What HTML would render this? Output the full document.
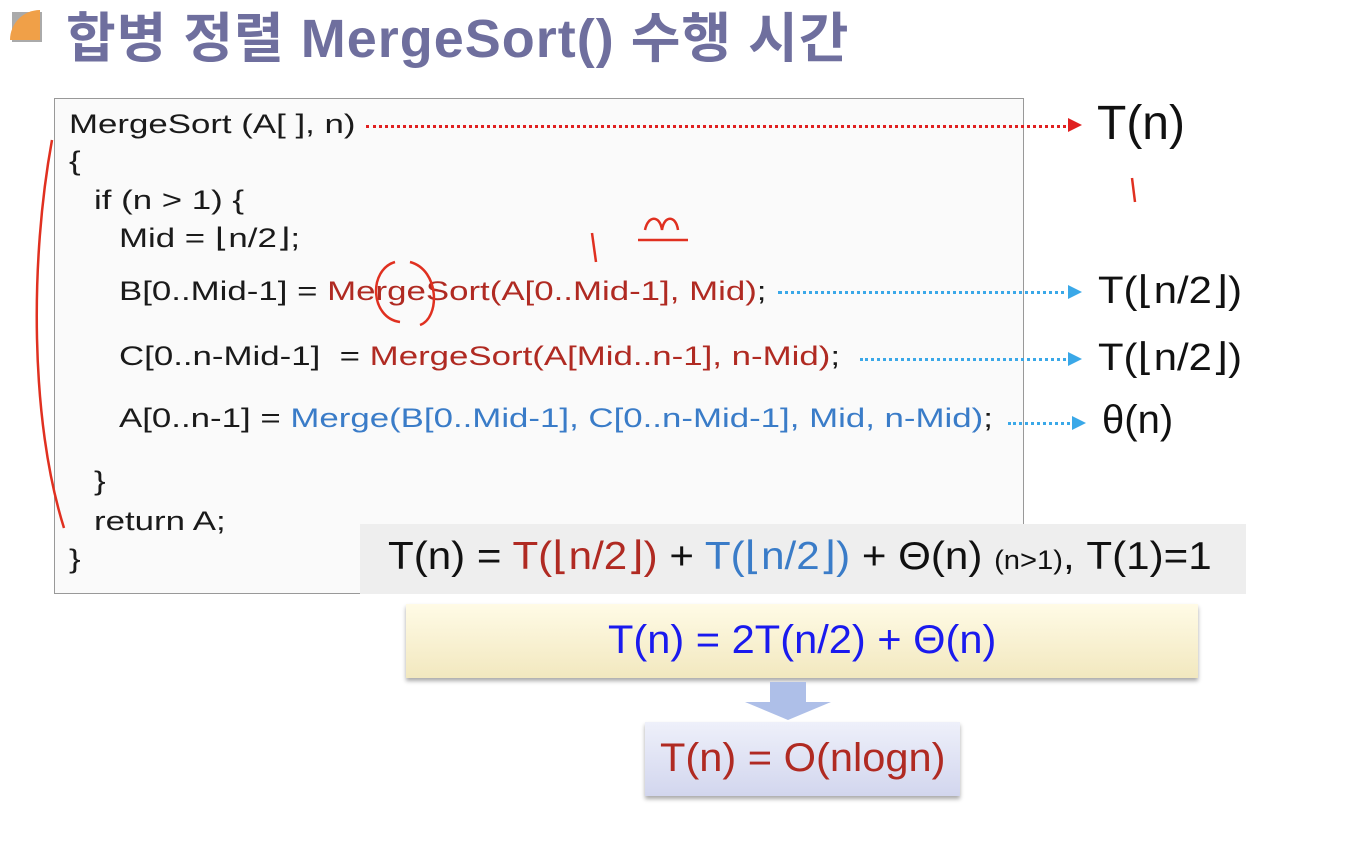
<!DOCTYPE html>
<html><head><meta charset="utf-8"><style>
body{margin:0;width:1360px;height:860px;background:#fff;position:relative;overflow:hidden;font-family:"Liberation Sans","Noto Sans CJK KR",sans-serif}
.a{position:absolute;white-space:nowrap}
.code{font-size:27px;color:#1a1a1a;transform:scaleX(1.29);transform-origin:left;margin-top:-1px}
.r{color:#b02a22}.b{color:#3a7cc8}
.dotr{position:absolute;height:0;border-top:3px dotted #e02020}
.dotb{position:absolute;height:0;border-top:3px dotted #3aa8e8}
.nar{display:inline-block;transform-origin:left}
</style></head><body>
<div class="a" style="left:12px;top:12px;width:30px;height:30px;background:#aaa;"></div>
<div class="a" style="left:10px;top:10px;width:30px;height:30px;background:#f0a048;border-top-left-radius:30px"></div>
<div class="a" style="left:66px;top:-6px;font-size:54px;color:#6f6f9e;font-weight:bold;letter-spacing:1px">합병 정렬 MergeSort() 수행 시간</div>

<div class="a" style="left:54px;top:98px;width:968px;height:494px;border:1px solid #999;background:#fafafa"></div>
<div class="a code" style="left:69px;top:110px">MergeSort (A[ ], n)</div>
<div class="a code" style="left:69px;top:147px">{</div>
<div class="a code" style="left:94px;top:186px">if (n &gt; 1) {</div>
<div class="a code" style="left:119px;top:224px">Mid = ⌊n/2⌋;</div>
<div class="a code" style="left:119px;top:277px">B[0..Mid-1] = <span class="r">MergeSort(A[0..Mid-1], Mid)</span>;</div>
<div class="a code" style="left:119px;top:342px">C[0..n-Mid-1]&nbsp; = <span class="r">MergeSort(A[Mid..n-1], n-Mid)</span>;</div>
<div class="a code" style="left:119px;top:404px">A[0..n-1] = <span class="b">Merge(B[0..Mid-1], C[0..n-Mid-1], Mid, n-Mid)</span>;</div>
<div class="a code" style="left:94px;top:467px">}</div>
<div class="a code" style="left:94px;top:507px">return A;</div>
<div class="a code" style="left:69px;top:545px">}</div>

<div class="dotr" style="left:366px;top:125px;width:706px"></div>
<div class="a" style="left:1068px;top:118px;border-left:14px solid #e02020;border-top:7px solid transparent;border-bottom:7px solid transparent"></div>
<div class="dotb" style="left:778px;top:291px;width:294px"></div>
<div class="a" style="left:1068px;top:285px;border-left:14px solid #3aa8e8;border-top:7px solid transparent;border-bottom:7px solid transparent"></div>
<div class="dotb" style="left:860px;top:358px;width:212px"></div>
<div class="a" style="left:1068px;top:352px;border-left:14px solid #3aa8e8;border-top:7px solid transparent;border-bottom:7px solid transparent"></div>
<div class="dotb" style="left:1008px;top:422px;width:68px"></div>
<div class="a" style="left:1072px;top:416px;border-left:14px solid #3aa8e8;border-top:7px solid transparent;border-bottom:7px solid transparent"></div>

<div class="a" style="left:1097px;top:96px;font-size:48px;color:#111">T(n)</div>
<div class="a" style="left:1098px;top:268px;font-size:38px;color:#111;transform:scaleX(1.1);transform-origin:left">T(⌊n/2⌋)</div>
<div class="a" style="left:1098px;top:335px;font-size:38px;color:#111;transform:scaleX(1.1);transform-origin:left">T(⌊n/2⌋)</div>
<div class="a" style="left:1102px;top:398px;font-size:40px;color:#111">θ(n)</div>

<svg class="a" style="left:0;top:0" width="1360" height="860" fill="none" stroke="#e03020" stroke-width="2.5">
<path d="M52 140 C30 260 30 420 64 528"/>
<path d="M1132 178 L1135 202"/>
<path d="M592 233 L596 262"/>
<path d="M638 240 L688 240"/>
<path d="M645 230 C648 215 660 215 662 230 C664 215 676 215 678 230"/>
<path d="M395 262 C368 270 370 318 400 322 M410 262 C440 270 440 318 420 325"/>
</svg>

<div class="a" style="left:360px;top:524px;width:886px;height:70px;background:#eeeeee"></div>
<div class="a" style="left:388px;top:534px;font-size:39px;color:#111"><span class="nar" style="transform:scaleX(1.08)">T(n) = <span class="r">T(⌊n/2⌋)</span> + <span class="b">T(⌊n/2⌋)</span> + Θ(n) <span style="font-size:27px">(n&gt;1)</span>, T(1)=1</span></div>

<div class="a" style="left:406px;top:604px;width:792px;height:74px;background:linear-gradient(#fffbe6,#f2e8bf);box-shadow:0 3px 4px #aaa"></div>
<div class="a" style="left:608px;top:618px;font-size:40px;color:#1a1aee"><span class="nar" style="transform:scaleX(1.04)">T(n) = 2T(n/2) + Θ(n)</span></div>

<div class="a" style="left:770px;top:682px;width:36px;height:22px;background:#aebfe8"></div>
<div class="a" style="left:745px;top:702px;border-top:18px solid #aebfe8;border-left:43px solid transparent;border-right:43px solid transparent"></div>

<div class="a" style="left:645px;top:722px;width:315px;height:74px;background:linear-gradient(#eef0fa,#d2d6ee);box-shadow:0 3px 4px #aaa"></div>
<div class="a" style="left:660px;top:736px;font-size:40px;color:#b02a22"><span class="nar" style="transform:scaleX(1.04)">T(n) = O(nlogn)</span></div>
</body></html>
